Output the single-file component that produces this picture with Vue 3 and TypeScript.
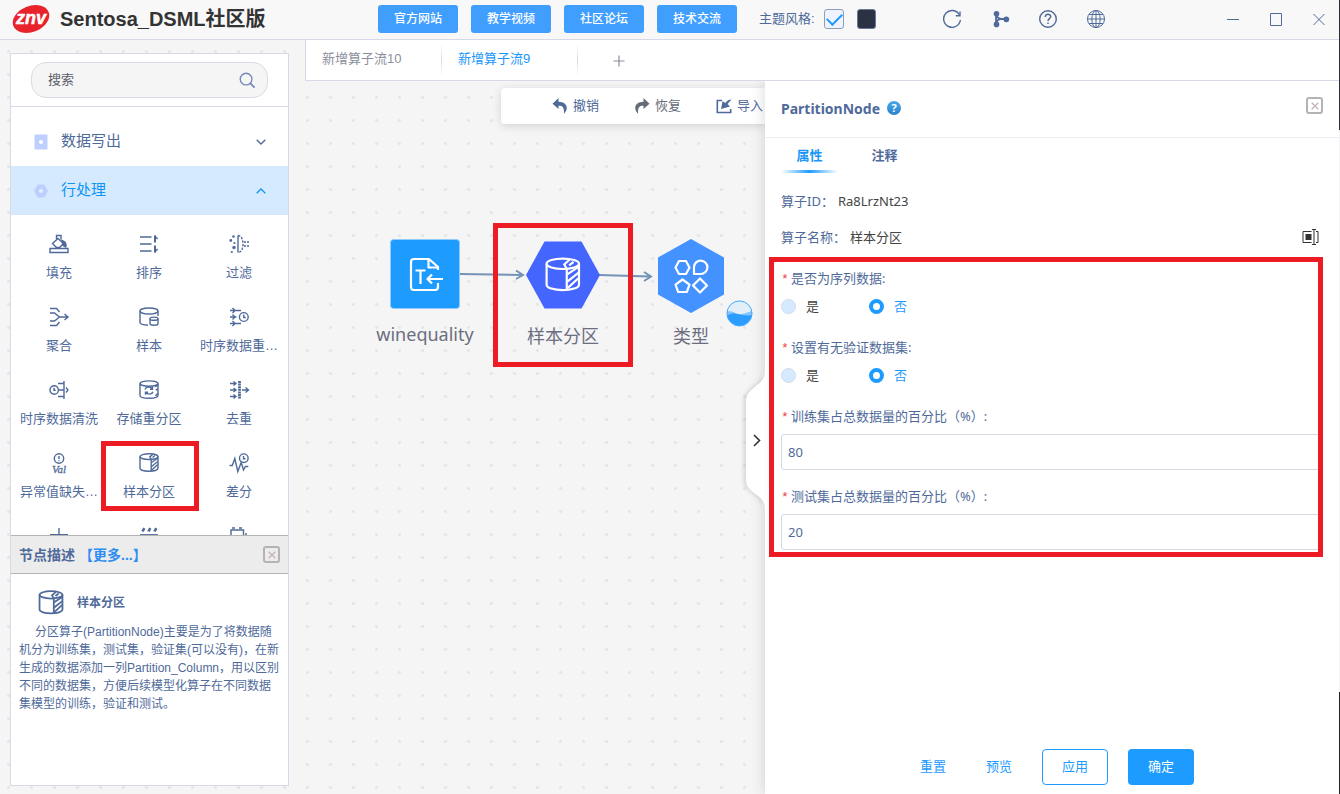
<script setup lang="ts">
import { ref } from 'vue'

interface Operator {
  name: string
  icon: string
  marked?: boolean
}

const links: string[] = ['官方网站', '教学视频', '社区论坛', '技术交流']
const lightTheme = ref(true)
const keyword = ref('')

const partitionIcon =
  '<ellipse cx="11" cy="4.6" rx="9" ry="2.9"/><path d="M2 4.6v11.6c0 1.7 4 3 9 3s9-1.3 9-3V4.6M13.2 7.4V19M13.200 7.400l-1.400-2.400 3-2.800"/><path d="M14.500 5.500l2.500-2M13.500 10.500l6-4M13.500 14.500l6.300-5M13.800 18l6-5.500"/>'

const operators: Operator[] = [
  { name: '填充', icon: '<path d="M2 15.5h18v4H2zM8.500 6V2.500h4.500v4M10 5.500l5.500 5-4 4h-3l-4-4z"/><path d="M14 7.500c3 1 4.500 3.500 3.700 6.500l-2.600-1.500z" fill="currentColor"/>' },
  { name: '排序', icon: '<path d="M2 4h11.500M2 11h11.500M2 18h11.500"/><path d="M17 2.500v7M17 12.500v7" stroke-width="2"/><path d="M17 2.500l3 3.200h-3zM17 19.500l3-3.200h-3z" fill="currentColor" stroke-width=".6"/>' },
  { name: '过滤', icon: '<path d="M10 2.500v17"/><path d="M10 2.500c3 0 5 3.500 5 8.500s-2 8.500-5 8.500" stroke-dasharray="2.400 1.200"/><g fill="currentColor" stroke="none"><circle cx="5.500" cy="3.500" r="1.300"/><circle cx="2.800" cy="7.500" r="1.400"/><circle cx="6.500" cy="10" r="1.100"/><circle cx="6" cy="14.500" r="1.700"/><circle cx="3.800" cy="19" r="1.100"/><circle cx="17" cy="9" r="1"/><circle cx="20" cy="9" r="1"/><circle cx="17" cy="13" r="1"/><circle cx="20" cy="13" r="1"/></g>' },
  { name: '聚合', icon: '<path d="M2 2.500h6.500l3 3.500M2 7h4.500l5 4h8.500M2 15h4.500l5-4M2 19.500h6.500l3-3.500M16.500 8l3.500 3-3.500 3"/>' },
  { name: '样本', icon: '<ellipse cx="11" cy="5" rx="9" ry="3"/><path d="M2 5v11.500c0 1.500 3.500 2.500 8 2.700M20 5v5"/><ellipse cx="16" cy="12.700" rx="4" ry="1.600"/><path d="M12 12.700v5c0 2 8 2 8 0v-5"/>' },
  { name: '时序数据重…', icon: '<path d="M2 4.500h11M2 11h6.500M2 17.500h11M4.500 2l2.500 2.500L4.500 7M4.500 8.500L7 11l-2.500 2.500M4.500 15L7 17.500 4.500 20"/><circle cx="15.800" cy="11" r="4.400"/><path d="M15.800 8.500V11.500h2"/>' },
  { name: '时序数据清洗', icon: '<circle cx="6.200" cy="11" r="4.200"/><path d="M6 8.700v2.500h1.700M16 2v18M10 4.500h6M11 11h5M10 17.500h6M18 8.500l2 2.500-2 2.500"/>' },
  { name: '存储重分区', icon: '<ellipse cx="11" cy="4.600" rx="9" ry="2.700"/><path d="M2 4.600v11.800c0 3.700 18 3.700 18 0V4.600M7 10.500c1-2.800 5.500-3.200 7.300-.6M14.500 7.700v2.500H12M15 12.800c-1 2.800-5.500 3.200-7.300.6M7.500 15.700v-2.500H10M17 7.500l3-1.500M17.800 11l2.200-1M17.500 17l2.500-3"/>' },
  { name: '去重', icon: '<path d="M2 4.500h6M2 11h6M2 17.500h6M5.500 2.500l2.500 2-2.500 2M5.500 9L8 11l-2.500 2M5.500 15.500l2.500 2-2.500 2M14 11h6.500M17.500 8.500l3 2.500-3 2.500"/><path d="M11.500 2v18" stroke-width="2.800" stroke-dasharray="2 .6"/>' },
  { name: '异常值缺失…', icon: '<circle cx="11" cy="6.500" r="4.700"/><path d="M11 4v3M11 8.300v1"/><text x="11" y="20.500" text-anchor="middle" font-family="Liberation Serif, serif" font-style="italic" font-size="11" fill="currentColor" stroke-width=".3">Val</text>' },
  { name: '样本分区', icon: partitionIcon, marked: true },
  { name: '差分', icon: '<path d="M1.500 13.500h2.800l2.500-7 3 13 3.400-9 2.300 7.500 1.800-3.500h3"/><circle cx="15.800" cy="6.200" r="4.300"/><path d="M15.500 4v2.700h2"/>' },
  { name: '', icon: '<path d="M11 3v8M2 9.800h18"/>' },
  { name: '', icon: '<path d="M4.500 6.500l1.800-3.300M10.500 6.500l1.800-3.300M16.500 6.500l1.800-3.300" stroke-width="2.600"/><path d="M2 9.800h18"/>' },
  { name: '', icon: '<path d="M3 12V5h12.500v7M4 3h3M11 3h3M18 8v4"/>' },
]

interface Choice {
  key: string
  label: string
  value: string
}
const choices = ref<Choice[]>([
  { key: 'sequence', label: '是否为序列数据:', value: '否' },
  { key: 'validation', label: '设置有无验证数据集:', value: '否' },
])

interface Ratio {
  key: string
  label: string
  value: string
}
const ratios = ref<Ratio[]>([
  { key: 'train', label: '训练集占总数据量的百分比（%）:', value: '80' },
  { key: 'test', label: '测试集占总数据量的百分比（%）:', value: '20' },
])
</script>

<template>
  <div class="app">
    <header class="top">
      <svg class="logo" viewBox="0 0 38 30" aria-hidden="true">
        <ellipse cx="19" cy="15" rx="19" ry="13" transform="rotate(-22 19 15)" fill="#e8232b" />
        <text x="19" y="20" text-anchor="middle" font-family="Liberation Sans, sans-serif" font-weight="bold" font-style="italic" font-size="18" fill="#fff" stroke="#fff" stroke-width=".5">znv</text>
      </svg>
      <h1>Sentosa_DSML社区版</h1>
      <nav class="links">
        <button v-for="l in links" :key="l" type="button">{{ l }}</button>
      </nav>
      <div class="theme">
        <label for="theme">主题风格:</label>
        <input id="theme" v-model="lightTheme" type="checkbox" />
        <button type="button" class="dark" aria-label="深色"></button>
      </div>
      <div class="tools">
        <button type="button" aria-label="刷新">
          <svg viewBox="0 0 20 20"><path d="M17.300 5.600A8.400 8.400 0 1 0 18.400 11" /><path d="M18 2.500v4.300h-4.200" /></svg>
        </button>
        <button type="button" aria-label="分支">
          <svg viewBox="0 0 20 20"><path d="M6 5v10M6 5c1 4 3 5 6 5h5M6 15c.5-3 2-5 5-5" stroke-width="1.800" /><g fill="currentColor" stroke="none"><circle cx="6.500" cy="4.800" r="2.800" /><circle cx="6.500" cy="15.400" r="2.800" /><circle cx="16.300" cy="10.300" r="2.900" /></g></svg>
        </button>
        <button type="button" aria-label="帮助">
          <svg viewBox="0 0 20 20"><circle cx="10" cy="10" r="8.300" /><path d="M7.300 8c0-3.700 5.400-3.500 5.400-.4 0 2-2.700 2-2.700 4.400M10 13.500v1.600" stroke-width="1.500" /></svg>
        </button>
        <button type="button" aria-label="语言">
          <svg viewBox="0 0 20 20" class="thin"><circle cx="10" cy="10" r="8.500" /><ellipse cx="10" cy="10" rx="4.200" ry="8.500" /><path d="M10 1.500v17M1.500 10h17M3 5.500h14M3 14.500h14" /></svg>
        </button>
      </div>
      <div class="window">
        <button type="button" aria-label="最小化"><svg viewBox="0 0 14 14"><path d="M1 7.500h12" /></svg></button>
        <button type="button" aria-label="最大化"><svg viewBox="0 0 14 14"><path d="M1.500 1.500h11v12h-11z" /></svg></button>
        <button type="button" aria-label="关闭"><svg viewBox="0 0 14 14"><path d="M1.500 2l11 11M12.500 2l-11 11" /></svg></button>
      </div>
    </header>

    <div class="body">
      <aside class="side">
        <div class="search">
          <div class="pill">
            <input v-model="keyword" type="text" placeholder="搜索" aria-label="搜索" />
            <svg viewBox="0 0 18 18"><circle cx="7.500" cy="7.500" r="6.200" /><path d="M12 12l4.500 4.500" stroke-width="2" /></svg>
          </div>
        </div>
        <div class="groups">
          <button type="button" class="group">
            <svg class="mark" viewBox="0 0 14 16"><rect x=".5" y=".5" width="13" height="15" rx="1" fill="#bccfff" /><circle cx="7" cy="8" r="2.100" fill="#fff" /></svg>
            <span>数据写出</span>
            <svg class="chev" viewBox="0 0 10 6"><path d="M.7.700L5 5 9.300.700" /></svg>
          </button>
          <button type="button" class="group open">
            <svg class="mark" viewBox="0 0 14 16"><path d="M3.700 1.500h6.600L14 8l-3.700 6.500H3.700L0 8z" fill="#bccfff" /><circle cx="7" cy="8" r="2.100" fill="#e4eeff" /></svg>
            <span>行处理</span>
            <svg class="chev" viewBox="0 0 10 6"><path d="M.7 5.300L5 1l4.300 4.300" /></svg>
          </button>
        </div>
        <div class="grid">
          <div v-for="(o, i) in operators" :key="i" class="op" :class="{ marked: o.marked }">
            <svg viewBox="0 0 22 22" v-html="o.icon"></svg>
            <span>{{ o.name }}</span>
          </div>
        </div>
        <section class="desc">
          <div class="desc-head">
            <h2>节点描述</h2>
            <a href="#">【更多...】</a>
            <button type="button" class="close" aria-label="关闭描述"><svg viewBox="0 0 8 8"><path d="M.7.700l6.600 6.600M7.300.700L.7 7.300" /></svg></button>
          </div>
          <div class="desc-title">
            <svg viewBox="0 0 22 22" v-html="partitionIcon"></svg>
            <h3>样本分区</h3>
          </div>
          <p>分区算子(PartitionNode)主要是为了将数据随机分为训练集，测试集，验证集(可以没有)，在新生成的数据添加一列Partition_Column，用以区别不同的数据集，方便后续模型化算子在不同数据集模型的训练，验证和测试。</p>
        </section>
      </aside>

      <main class="work">
        <div class="flows">
          <button type="button" class="flow">新增算子流10</button>
          <button type="button" class="flow on">新增算子流9</button>
          <button type="button" class="add" aria-label="新增">
            <svg viewBox="0 0 12 12"><path d="M6 .500v11M.500 6h11" /></svg>
          </button>
        </div>
        <div class="split">
          <section class="stage">
            <div class="bar">
              <button type="button">
                <svg viewBox="0 0 16 16"><path d="M6.500 0L.500 5.700l6 5.300V7.700c3.500-.2 6 .8 5.400 8.300C17.500 9.500 14.500 4 6.500 3.700z" /></svg>撤销
              </button>
              <button type="button" class="dim">
                <svg viewBox="0 0 16 16"><path d="M9.500 0l6 5.700-6 5.300V7.700c-3.500-.2-6 .8-5.400 8.300C-1.500 9.500 1.500 4 9.500 3.700z" /></svg>恢复
              </button>
              <button type="button">
                <svg viewBox="0 0 16 16"><path d="M6 2.500H1.300v12h13.400V11" fill="none" stroke="currentColor" stroke-width="1.600" /><path d="M15.500 1.500l-4 4.500 2.500 2.500-9 2.500 1.600-8 2.600 2C11.200 2.500 13 1.500 15.500 1.500z" /></svg>导入
              </button>
            </div>

            <svg class="wires" viewBox="0 0 460 713" aria-hidden="true">
              <path d="M155 193L217 194M211 189.500l7 4.500-7 4M294 194L345 195.500M339 191l7 4.500-7 4.500" />
            </svg>
            <div class="node n1">
              <svg viewBox="0 0 70 70">
                <rect x=".5" y=".5" width="69" height="69" rx="3" fill="#1e9bff" stroke="#8fcbff" />
                <g fill="none" stroke="#fff" stroke-width="2.200" stroke-linejoin="round">
                  <path d="M48 31v-3l-9-8H24q-3 0-3 3v25q0 3 3 3h21q3 0 3-3v-4" />
                  <path d="M38.500 20v8.500H48M25.500 31.500h10M30.500 31.500v13.500M53 40H38M42 35.500L37.500 40l4.500 4.500" />
                </g>
              </svg>
              <span>winequality</span>
            </div>
            <div class="node n2">
              <svg viewBox="0 0 74 70">
                <path d="M18.500 1.500h37L74 35 55.500 68.500h-37L0 35z" fill="#4565ff" />
                <g transform="translate(17 15.500) scale(1.800)" fill="none" stroke="#fff" stroke-width="1.200" v-html="partitionIcon"></g>
              </svg>
              <span>样本分区</span>
            </div>
            <div class="node n3">
              <svg viewBox="0 0 66 74">
                <path d="M33 0l33 18.500v37L33 74 0 55.500v-37z" fill="#4492ff" />
                <g fill="none" stroke="#fff" stroke-width="2.200" stroke-linejoin="round">
                  <path d="M21 22h7l3.500 6.500L28 35h-7l-3.500-6.500z" />
                  <path d="M36 35v-7a6.700 6.700 0 1 1 6.700 7z" />
                  <path d="M24.500 40.500l7 5.200-2.700 7.300h-8.600l-2.700-7.300z" />
                  <path d="M42 39.500l7 7-7 7-7-7z" />
                </g>
              </svg>
              <span>类型</span>
            </div>
            <svg class="water" viewBox="0 0 28 28" aria-hidden="true">
              <circle cx="14" cy="14" r="13" fill="#e2eef8" />
              <path d="M1.200 12c4-1 6 0 9 2s10 0 16.600-2.500A13 13 0 0 1 1.200 16z" fill="#84c3fb" />
              <path d="M1.200 16c4-2 7-2.500 11-1.500s9 2 14.600 1.300A13 13 0 0 1 1.200 16z" fill="#2a9dff" />
              <circle cx="14" cy="14" r="13" fill="none" stroke="#3aa4ff" />
            </svg>
            <div class="frame canvas-frame"></div>
          </section>

          <aside class="drawer">
            <button type="button" class="handle" aria-label="收起">
              <svg viewBox="0 0 20 136"><path class="shape" d="M20 0C20 14 1 14 1 30v78c0 14 19 14 19 28z" /><path class="arrow" d="M9 63l5.500 5.500L9 74" /></svg>
            </button>
            <div class="drawer-head">
              <h2>PartitionNode</h2>
              <button type="button" class="tip" aria-label="说明">?</button>
              <button type="button" class="close" aria-label="关闭面板"><svg viewBox="0 0 8 8"><path d="M.7.700l6.600 6.600M7.300.700L.7 7.300" /></svg></button>
            </div>
            <div class="tabs">
              <button type="button" class="on">属性</button>
              <button type="button">注释</button>
            </div>
            <form class="form" @submit.prevent>
              <div class="info"><span>算子ID：</span><b>Ra8LrzNt23</b></div>
              <div class="info">
                <span>算子名称：</span><b>样本分区</b>
                <button type="button" class="rename" aria-label="重命名">
                  <svg viewBox="0 0 17 16"><path d="M9.500 2.500H1v11h8.500M14 2.500h2v11h-2M12 1v14M10 .500h4M10 15.500h4" fill="none" stroke="#333" /><rect x="3.500" y="5" width="6" height="6" fill="#333" /></svg>
                </button>
              </div>
              <div class="fields">
                <fieldset v-for="c in choices" :key="c.key">
                  <legend><i>*</i>{{ c.label }}</legend>
                  <div class="radios">
                    <label v-for="v in ['是', '否']" :key="v"><input v-model="c.value" type="radio" :name="c.key" :value="v" /><span>{{ v }}</span></label>
                  </div>
                </fieldset>
                <div v-for="r in ratios" :key="r.key" class="field">
                  <label :for="r.key"><i>*</i>{{ r.label }}</label>
                  <input :id="r.key" v-model="r.value" type="text" />
                </div>
                <div class="frame form-frame"></div>
              </div>
            </form>
            <footer class="actions">
              <button type="button" class="plain">重置</button>
              <button type="button" class="plain">预览</button>
              <button type="button" class="outline">应用</button>
              <button type="button" class="solid">确定</button>
            </footer>
          </aside>
        </div>
      </main>
    </div>
  </div>
</template>

<style>
body {
  margin: 0;
}
</style>

<style scoped>
.app {
  position: relative;
  display: flex;
  flex-direction: column;
  height: 100vh;
  overflow: hidden;
  background: #f5f5f5;
  color: #4f6a9a;
  font-family: 'Liberation Sans', 'Noto Sans CJK SC', sans-serif;
  font-size: 13px;
  line-height: 20px;
}
.app::after {
  content: '';
  position: absolute;
  top: 0;
  right: 0;
  bottom: 0;
  width: 1px;
  background: linear-gradient(#2b2e35 130px, #f3f3f8 130px, #f3f3f8 calc(100% - 102px), #222 calc(100% - 102px));
}
.app * {
  box-sizing: border-box;
}
button {
  padding: 0;
  border: 0;
  background: none;
  color: inherit;
  font: inherit;
  cursor: pointer;
}
svg {
  display: block;
  flex: none;
}
h1, h2, h3, p {
  margin: 0;
}

.top {
  display: flex;
  align-items: center;
  flex: none;
  height: 40px;
  padding: 0 14px 2px 12px;
  border-bottom: 1px solid #d6dae8;
  background: #f8f8f8;
}
.logo {
  width: 38px;
  height: 30px;
}
h1 {
  width: 328px;
  padding-left: 10px;
  color: #333;
  font-size: 20px;
  line-height: 30px;
  white-space: nowrap;
}
.links {
  display: flex;
  gap: 13px;
}
.links button {
  width: 80px;
  height: 28px;
  border-radius: 3px;
  background: #409eff;
  color: #fff;
  font-size: 12px;
  font-weight: 500;
}
.theme {
  display: flex;
  align-items: center;
  margin-left: 22px;
}
.theme input {
  appearance: none;
  width: 20px;
  height: 20px;
  margin: 0 13px 0 9px;
  border: 1px solid #8d9dbd;
  border-radius: 3px;
  background: #f0f3fd;
}
.theme input:checked::before {
  content: '';
  display: block;
  width: 13px;
  height: 7px;
  margin: 3px 0 0 2px;
  border: solid #1e9bff;
  border-width: 0 0 2px 2px;
  transform: rotate(-45deg);
}
.dark {
  width: 19px;
  height: 20px;
  border: 1px solid #6b7896;
  border-radius: 3px;
  background: #2a3244;
}
.tools {
  display: flex;
  gap: 28px;
  margin-left: 66px;
}
.tools svg {
  width: 20px;
  height: 20px;
  fill: none;
  stroke: currentColor;
  stroke-width: 1.4;
}
.tools .thin {
  stroke-width: 1;
}
.window {
  display: flex;
  gap: 29px;
  margin-left: auto;
}
.window svg {
  width: 14px;
  height: 14px;
  fill: none;
  stroke: currentColor;
}

.body {
  display: flex;
  flex: 1;
  min-height: 0;
  gap: 16px;
  padding-right: 1px;
  background: radial-gradient(circle at center, #e5e5e8 1px, transparent 2px) -3px 0 / 23px 23px;
}

.side {
  display: flex;
  flex-direction: column;
  flex: none;
  width: 279px;
  margin: 13px 0 8px 10px;
  border: 1px solid #d6dae8;
  background: #fff;
}
.search {
  padding: 8px 20px;
  border-bottom: 1px solid #d6dae8;
}
.pill {
  display: flex;
  align-items: center;
  height: 36px;
  padding: 0 11px 0 16px;
  border: 1px solid #d9dbe8;
  border-radius: 15px;
  background: #f5f5f5;
}
.pill input {
  flex: 1;
  min-width: 0;
  padding: 0;
  border: 0;
  outline: 0;
  background: none;
  font: inherit;
}
.pill input::placeholder {
  color: #5c5f6b;
}
.pill svg {
  width: 17px;
  height: 17px;
  fill: none;
  stroke: #7688bb;
  stroke-width: 1.4;
}
.groups {
  padding-top: 10px;
}
.group {
  display: flex;
  align-items: center;
  width: 100%;
  height: 49px;
  padding: 0 22px 0 23px;
  font-size: 15px;
}
.group span {
  margin: 0 auto 0 13px;
  padding-bottom: 2px;
}
.mark {
  width: 14px;
  height: 16px;
}
.chev {
  width: 10px;
  height: 6px;
  fill: none;
  stroke: currentColor;
  stroke-width: 1.3;
}
.open {
  background: #d6eaff;
  color: #0d94f7;
}
.grid {
  display: grid;
  grid-template-columns: repeat(3, 90px);
  grid-auto-rows: 73px;
  flex: 1;
  min-height: 0;
  padding-left: 3px;
  overflow: hidden;
}
.op {
  position: relative;
  display: flex;
  flex-direction: column;
  align-items: center;
  gap: 8px;
  padding-top: 18px;
  white-space: nowrap;
}
.op svg,
.desc-title svg {
  width: 22px;
  height: 22px;
  fill: none;
  stroke: currentColor;
  stroke-width: 1.4;
}
.marked::after {
  content: '';
  position: absolute;
  inset: 7px -5px -4px -3px;
  border: 5px solid #ed1c24;
}

.desc {
  flex: none;
  height: 250px;
}
.desc-head {
  display: flex;
  align-items: center;
  height: 39px;
  padding: 0 8px;
  border: solid #b4b4b4;
  border-width: 1px 0;
  background: #ececec;
}
.desc-head h2 {
  font-size: 14px;
}
.desc-head a {
  margin-left: 4px;
  color: #2e8df2;
  font-size: 14px;
  font-weight: bold;
  text-decoration: none;
}
.close {
  display: flex;
  align-items: center;
  justify-content: center;
  width: 17px;
  height: 17px;
  margin-left: auto;
  border: 2px solid #b3b3b3;
  border-radius: 3px;
}
.close svg {
  width: 8px;
  height: 8px;
  stroke: #c4b4b4;
  stroke-width: 1.3;
}
.desc-title {
  display: flex;
  align-items: center;
  gap: 12px;
  padding: 14px 26px 5px;
}
.desc-title svg {
  width: 28px;
  height: 30px;
}
.desc-title h3 {
  font-size: 12px;
}
.desc p {
  padding: 0 7px 0 8px;
  font-size: 12px;
  line-height: 18px;
  text-indent: 16px;
}

.work {
  display: flex;
  flex-direction: column;
  flex: 1;
  min-width: 0;
}
.flows {
  display: flex;
  align-items: stretch;
  flex: none;
  height: 41px;
  border: solid #d6dae8;
  border-width: 0 0 1px 1px;
  background: #fff;
}
.flow {
  width: 136px;
  padding: 0 0 2px 16px;
  border-right: 1px solid;
  border-image: linear-gradient(transparent 10%, #d6dae8 50%, transparent 90%) 1;
  color: #8b8e9c;
  text-align: left;
}
.on {
  color: #1a96f8;
}
.add {
  margin-left: 35px;
  padding-top: 2px;
}
.add svg {
  width: 12px;
  height: 12px;
  stroke: #8b8e9c;
  stroke-width: 1.2;
}
.split {
  display: flex;
  flex: 1;
  min-height: 0;
}
.stage {
  position: relative;
  flex: 1;
  min-width: 0;
  overflow: hidden;
}
.bar {
  display: flex;
  align-items: center;
  gap: 35px;
  height: 36px;
  margin: 7px 0 0 196px;
  padding-left: 51px;
  border-radius: 4px 0 0 4px;
  background: #fff;
  box-shadow: 0 2px 10px rgba(0, 0, 0, 0.14);
  white-space: nowrap;
}
.bar button {
  display: flex;
  flex: none;
  align-items: center;
  gap: 5px;
}
.bar svg {
  width: 16px;
  height: 16px;
  fill: currentColor;
}
.dim {
  color: #676b77;
}
.wires {
  position: absolute;
  top: 0;
  left: 0;
  width: 460px;
  height: 713px;
  fill: none;
  stroke: #7393b8;
  stroke-width: 2;
}
.node {
  position: absolute;
  display: flex;
  flex-direction: column;
  align-items: center;
  gap: 12px;
  color: #6b6f80;
  font-family: 'Noto Sans', 'Noto Sans CJK SC', sans-serif;
  font-size: 18px;
  line-height: 26px;
}
.node svg {
  height: 70px;
}
.n1 {
  top: 158px;
  left: 70px;
  width: 100px;
}
.n2 {
  top: 159px;
  left: 208px;
  width: 100px;
  gap: 13px;
}
.n3 {
  top: 158px;
  left: 336px;
  width: 100px;
  gap: 10px;
}
.n3 svg {
  height: 74px;
}
.water {
  position: absolute;
  top: 219px;
  left: 421px;
  width: 27px;
  height: 27px;
}
.frame {
  position: absolute;
  border: 5px solid #ed1c24;
  pointer-events: none;
}
.canvas-frame {
  top: 142px;
  left: 188px;
  width: 140px;
  height: 144px;
}

.drawer {
  position: relative;
  display: flex;
  flex-direction: column;
  flex: none;
  width: 574px;
  background: #fff;
  box-shadow: 0 0 14px rgba(60, 60, 90, 0.2);
  font-family: 'Noto Sans', 'Noto Sans CJK SC', sans-serif;
  clip-path: inset(0 0 0 -40px);
}
.handle {
  position: absolute;
  top: 291px;
  left: -20px;
}
.handle svg {
  width: 20px;
  height: 136px;
  overflow: visible;
}
.shape {
  fill: #fff;
  filter: drop-shadow(-2px 0 2px rgba(60, 60, 90, 0.18));
}
.arrow {
  fill: none;
  stroke: #333;
  stroke-width: 1.6;
}
.drawer-head {
  display: flex;
  align-items: flex-start;
  height: 57px;
  padding: 16px 16px 0;
  border-bottom: 1px solid #eeeef2;
}
.drawer-head h2 {
  font-size: 14px;
  line-height: 24px;
}
.tip {
  width: 14px;
  height: 14px;
  margin: 4px 0 0 7px;
  border-radius: 7px;
  background: linear-gradient(#4aa9ea, #2a82c9);
  color: #fff;
  font-size: 11px;
  font-weight: bold;
  line-height: 14px;
}
.tabs {
  display: flex;
  gap: 18px;
  padding: 7px 16px 0;
}
.tabs button {
  width: 57px;
  padding-bottom: 8px;
  font-weight: bold;
}
.tabs .on {
  background: linear-gradient(90deg, transparent, #1e9bff, transparent) bottom / 100% 3px no-repeat;
}
.form {
  flex: 1;
  min-height: 0;
  padding: 18px 18px 0 16px;
}
.info {
  display: flex;
  margin-bottom: 16px;
}
.info b {
  margin-left: 4px;
  color: #444;
  font-weight: normal;
}
.rename {
  margin-left: auto;
  margin-right: 2px;
}
.rename svg {
  width: 17px;
  height: 16px;
}
.fields {
  position: relative;
  padding-top: 5px;
}
fieldset {
  margin: 0 0 21px;
  padding: 0;
  border: 0;
}
legend,
.field label {
  display: block;
  padding: 0;
  margin-bottom: 8px;
}
i {
  display: inline-block;
  width: 10px;
  color: #f03e3e;
  font-family: 'Liberation Mono', monospace;
  font-style: normal;
  line-height: 16px;
}
.radios {
  display: flex;
}
.radios label {
  display: flex;
  align-items: center;
  width: 88px;
  color: #444;
}
.radios input {
  appearance: none;
  width: 15px;
  height: 15px;
  margin: 0 10px 0 0;
  border: 1px solid #d3dbea;
  border-radius: 8px;
  background: #d6eaff;
}
.radios input:checked {
  border: 4px solid #1e9bff;
  background: #fff;
}
.radios input:checked + span {
  color: #1e9bff;
}
.field {
  margin-bottom: 16px;
}
.field input {
  display: block;
  width: 100%;
  height: 36px;
  padding: 0 6px;
  border: 1px solid #d6dae5;
  border-radius: 3px;
  outline: 0;
  color: inherit;
  font: inherit;
}
.form-frame {
  inset: -6px -2px -7px -12px;
}
.actions {
  display: flex;
  justify-content: center;
  gap: 20px;
  padding-bottom: 9px;
}
.actions button {
  width: 66px;
  height: 36px;
  padding-bottom: 2px;
  border-radius: 4px;
  color: #1e9bff;
}
.actions .plain {
  width: 46px;
}
.actions .outline {
  border: 1px solid #1e9bff;
}
.actions .solid {
  background: #1e9bff;
  color: #fff;
}
</style>
